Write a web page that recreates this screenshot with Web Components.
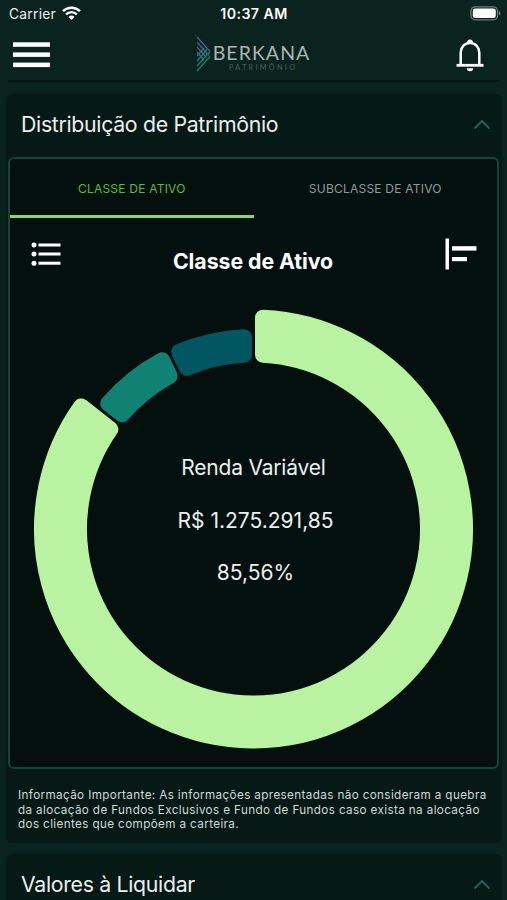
<!DOCTYPE html>
<html lang="pt-BR">
<head>
  <meta charset="UTF-8">
  <meta name="viewport" content="width=device-width, initial-scale=1.0">
  <title>Berkana Patrimônio</title>
  <style>
    html {
      background: #0a231e;
    }
    body {
      margin: 0;
      height: 900px;
      overflow: hidden;
      font-family: Inter, "Liberation Sans", sans-serif;
      color: #eaf0ee;
    }
    .amount {
      letter-spacing: 0;
      margin-left: 4px;
    }
  </style>
</head>
<body>
  <app-screen>
    <status-bar slot="top" carrier="Carrier" time="10:37 AM"></status-bar>
    <app-header slot="top"></app-header>

    <accordion-card heading="Distribuição de Patrimônio">
      <asset-panel>
        <asset-tab slot="tabs" active>CLASSE DE ATIVO</asset-tab>
        <asset-tab slot="tabs">SUBCLASSE DE ATIVO</asset-tab>
        <span slot="title">Classe de Ativo</span>
        <donut-chart>
          <span>Renda Variável</span>
          <span class="amount">R$ 1.275.291,85</span>
          <span class="amount">85,56%</span>
        </donut-chart>
      </asset-panel>
      <info-note>
        <div>Informação Importante: As informações apresentadas não consideram a quebra</div>
        <div>da alocação de Fundos Exclusivos e Fundo de Fundos caso exista na alocação</div>
        <div>dos clientes que compõem a carteira.</div>
      </info-note>
    </accordion-card>

    <accordion-card heading="Valores à Liquidar"></accordion-card>
  </app-screen>

  <script>
    class BaseElement extends HTMLElement {
      constructor() {
        super();
        this.attachShadow({ mode: 'open' });
      }

      connectedCallback() {
        this.shadowRoot.innerHTML = this.render();
      }
    }

    class AppScreen extends BaseElement {
      render() {
        return `
          <style>
            :host { display: flex; flex-direction: column; height: 900px; overflow: hidden; }
            main { display: flex; flex-direction: column; gap: 11px; padding: 12px 5px 0 6px; }
          </style>
          <slot name="top"></slot>
          <main><slot></slot></main>`;
      }
    }

    class StatusBar extends BaseElement {
      render() {
        return `
          <style>
            :host {
              display: grid; grid-template-columns: 1fr auto 1fr; align-items: center;
              height: 28px; padding: 0 6px 0 9px; box-sizing: border-box; flex: none;
              font-size: 13.8px; line-height: 28px;
            }
            .left { display: flex; align-items: center; gap: 6px; letter-spacing: 0.25px; }
            .left svg { margin-top: -2px; }
            .time { font-size: 14.2px; font-weight: 600; letter-spacing: 0.4px; color: #fff; margin-right: 2px; }
            .battery { justify-self: end; margin-top: -1px; }
            svg { display: block; }
          </style>
          <div class="left">
            <span>${this.getAttribute('carrier')}</span>
            <svg width="19" height="14" viewBox="0 0 19 14" fill="none" stroke="#fff" stroke-width="2.4">
              <path d="M1 5.2a12.2 12.2 0 0 1 17 0"/>
              <path d="M4.1 8.3a7.8 7.8 0 0 1 10.8 0"/>
              <path d="M9.5 14 6.5 11a4.3 4.3 0 0 1 6 0z" fill="#fff" stroke="none"/>
            </svg>
          </div>
          <span class="time">${this.getAttribute('time')}</span>
          <svg class="battery" width="31" height="15" viewBox="0 0 31 15">
            <rect x="1" y="0.8" width="26.5" height="13" rx="4" fill="none" stroke="#6b7d79" stroke-width="1.3"/>
            <rect x="2.8" y="2.5" width="23" height="9.6" rx="2.4" fill="#fff"/>
            <path d="M28.8 5v4.6q1.7-.7 1.7-2.3t-1.7-2.3z" fill="#6b7d79"/>
          </svg>`;
      }
    }

    class AppHeader extends BaseElement {
      render() {
        return `
          <style>
            :host {
              display: grid; grid-template-columns: 1fr auto 1fr; align-items: center;
              height: 54px; margin: 0 7px 0 8px; padding: 2px 16px 0 5px; box-sizing: border-box;
              border-bottom: 2px solid #061813; flex: none;
            }
            svg { display: block; }
            .bell { justify-self: end; }
          </style>
          <svg width="37" height="26" viewBox="0 0 37 26" fill="#fff">
            <rect y="0.3" width="37" height="4.5"/>
            <rect y="10.4" width="37" height="4.5"/>
            <rect y="20.6" width="37" height="4.5"/>
          </svg>
          <brand-logo></brand-logo>
          <svg class="bell" width="28" height="34" viewBox="0 0 28 34" fill="none" stroke="#fff" stroke-width="2.5">
            <path d="M4.7 26V14.5a9.3 9.6 0 0 1 18.6 0V26"/>
            <path d="M.5 27.3h27" stroke-width="2.8"/>
            <path d="M11 5a3 3.6 0 0 1 6 0zM10.8 30.3h6.4a3.2 3 0 0 1-6.4 0z" fill="#fff" stroke="none"/>
          </svg>`;
      }
    }

    class BrandLogo extends BaseElement {
      render() {
        return `
          <style>
            :host { display: flex; align-items: center; gap: 2px; height: 36px; margin-left: 9px; }
            svg { display: block; margin-top: -2px; }
            .words { display: flex; flex-direction: column; align-items: flex-end; padding-top: 3px; }
            .name { font: 400 19.5px/22px Lato, sans-serif; letter-spacing: 1.05px; color: #a9b7b3; }
            .sub { font: 400 7.3px/8px Lato, sans-serif; letter-spacing: 2.3px; color: #45605a; margin-right: 13px; }
          </style>
          <svg width="15" height="36" viewBox="0 0 15 36" fill="none" stroke-width="1.2">
            <g stroke="#526683">
              <path d="M1 1l13 14.5"/><path d="M1 6l12 13.5"/><path d="M1 11l9.5 10.5"/><path d="M1 16l7 8"/>
            </g>
            <g stroke="#168573">
              <path d="M1 35l13-14.5"/><path d="M1 30l12.5-14"/><path d="M1 25l10-11.5"/><path d="M1 20l7-8"/>
            </g>
          </svg>
          <div class="words">
            <span class="name">BERKANA</span>
            <span class="sub">PATRIMÔNIO</span>
          </div>`;
      }
    }

    class AccordionCard extends BaseElement {
      render() {
        return `
          <style>
            :host { display: block; background: #061915; border-radius: 6px; padding: 0 3px 0 2px; }
            header {
              display: flex; align-items: center; justify-content: space-between;
              height: 60px; padding: 0 9px 0 13px; margin-bottom: 3px; box-sizing: border-box;
            }
            h2 { margin: 0; font-size: 21.3px; line-height: 26px; font-weight: 400; letter-spacing: -0.32px; }
            svg { display: block; }
          </style>
          <header>
            <h2>${this.getAttribute('heading')}</h2>
            <svg width="17" height="11" viewBox="0 0 17 11" fill="none" stroke="#1d6b56" stroke-width="1.8">
              <path d="M1.5 9.5l7.5-7.5 7.5 7.5"/>
            </svg>
          </header>
          <slot></slot>`;
      }
    }

    class AssetPanel extends BaseElement {
      render() {
        return `
          <style>
            :host {
              display: block; height: 612px; box-sizing: border-box;
              border: 2px solid #164438; border-radius: 6px; background: #03100d;
            }
            .tabs { display: flex; height: 59px; }
            .tools { display: flex; justify-content: space-between; height: 62px; padding: 20px 20px 0 21px; box-sizing: border-box; }
            .title { font-size: 21.3px; font-weight: 700; line-height: 26px; letter-spacing: -0.05px; padding-top: 10px; color: #fff; }
            svg { display: block; }
            .list { margin-top: 4px; }
          </style>
          <div class="tabs"><slot name="tabs"></slot></div>
          <div class="tools">
            <svg class="list" width="30" height="24" viewBox="0 0 30 24" fill="#fff">
              <circle cx="3" cy="3" r="2.5"/><rect x="7.5" y="1.5" width="22" height="3"/>
              <circle cx="3" cy="12" r="2.5"/><rect x="7.5" y="10.5" width="22" height="3"/>
              <circle cx="3" cy="21.2" r="2.5"/><rect x="7.5" y="19.7" width="22" height="3"/>
            </svg>
            <div class="title"><slot name="title"></slot></div>
            <svg width="32" height="32" viewBox="0 0 32 32" fill="#fff">
              <rect x="0.5" y="0.5" width="3.5" height="31"/>
              <rect x="7" y="8.2" width="24.5" height="4.4"/>
              <rect x="7" y="19" width="15" height="4.2"/>
            </svg>
          </div>
          <slot></slot>`;
      }
    }

    class AssetTab extends BaseElement {
      render() {
        return `
          <style>
            :host {
              flex: 1; display: flex; align-items: center; justify-content: center;
              box-sizing: border-box; padding-top: 3px; border-bottom: 3px solid transparent;
              font-size: 12px; letter-spacing: 0.22px; color: #929b99;
            }
            :host([active]) { color: #5fb945; border-bottom-color: #86dc5d; }
          </style>
          <slot></slot>`;
      }
    }

    // Slices run clockwise from 12 o'clock; the selected slice is drawn thicker.
    const SLICES = [
      { from: 0, to: 308, outer: 219.5, color: '#b9f3a1' },
      { from: 308, to: 334.4, outer: 200, color: '#108273' },
      { from: 334.4, to: 360, outer: 200, color: '#025661' }
    ];
    const INNER = 166.5;
    const CORNER = 8;
    const PAD = 1.5;

    class DonutChart extends BaseElement {
      slicePath({ from, to, outer }) {
        const rad = Math.PI / 180;
        const inset = CORNER + PAD;
        const r1 = INNER + CORNER;
        const r2 = outer - CORNER;
        const point = (r, a) => `${(r * Math.sin(a)).toFixed(2)} ${(-r * Math.cos(a)).toFixed(2)}`;
        const start = r => from * rad + Math.asin(inset / r);
        const end = r => to * rad - Math.asin(inset / r);
        const large = to - from > 180 ? 1 : 0;
        return `M${point(r2, start(r2))}A${r2} ${r2} 0 ${large} 1 ${point(r2, end(r2))}` +
          `L${point(r1, end(r1))}A${r1} ${r1} 0 ${large} 0 ${point(r1, start(r1))}Z`;
      }

      render() {
        // the round-joined stroke gives every slice its rounded corners
        const paths = SLICES.map(s =>
          `<path d="${this.slicePath(s)}" fill="${s.color}" stroke="${s.color}" stroke-width="${CORNER * 2}" stroke-linejoin="round"/>`
        ).join('');
        return `
          <style>
            :host { display: grid; justify-items: center; align-items: center; margin-top: 27px; }
            svg, .center { grid-area: 1 / 1; }
            svg { display: block; }
            .center {
              display: flex; flex-direction: column; align-items: center; gap: 26px;
              font-size: 21px; line-height: 26.5px; letter-spacing: -0.2px; padding-bottom: 16px;
            }
          </style>
          <svg width="444" height="444" viewBox="-221.5 -222 444 444">${paths}</svg>
          <div class="center"><slot></slot></div>`;
      }
    }

    class InfoNote extends BaseElement {
      render() {
        return `
          <style>
            :host {
              display: block; height: 74px; padding: 19px 0 0 10px; box-sizing: border-box;
              font-size: 11.7px; line-height: 14.7px; letter-spacing: 0.37px; color: #d0dad7;
              white-space: nowrap;
            }
          </style>
          <slot></slot>`;
      }
    }

    customElements.define('app-screen', AppScreen);
    customElements.define('status-bar', StatusBar);
    customElements.define('app-header', AppHeader);
    customElements.define('brand-logo', BrandLogo);
    customElements.define('accordion-card', AccordionCard);
    customElements.define('asset-panel', AssetPanel);
    customElements.define('asset-tab', AssetTab);
    customElements.define('donut-chart', DonutChart);
    customElements.define('info-note', InfoNote);
  </script>
</body>
</html>
